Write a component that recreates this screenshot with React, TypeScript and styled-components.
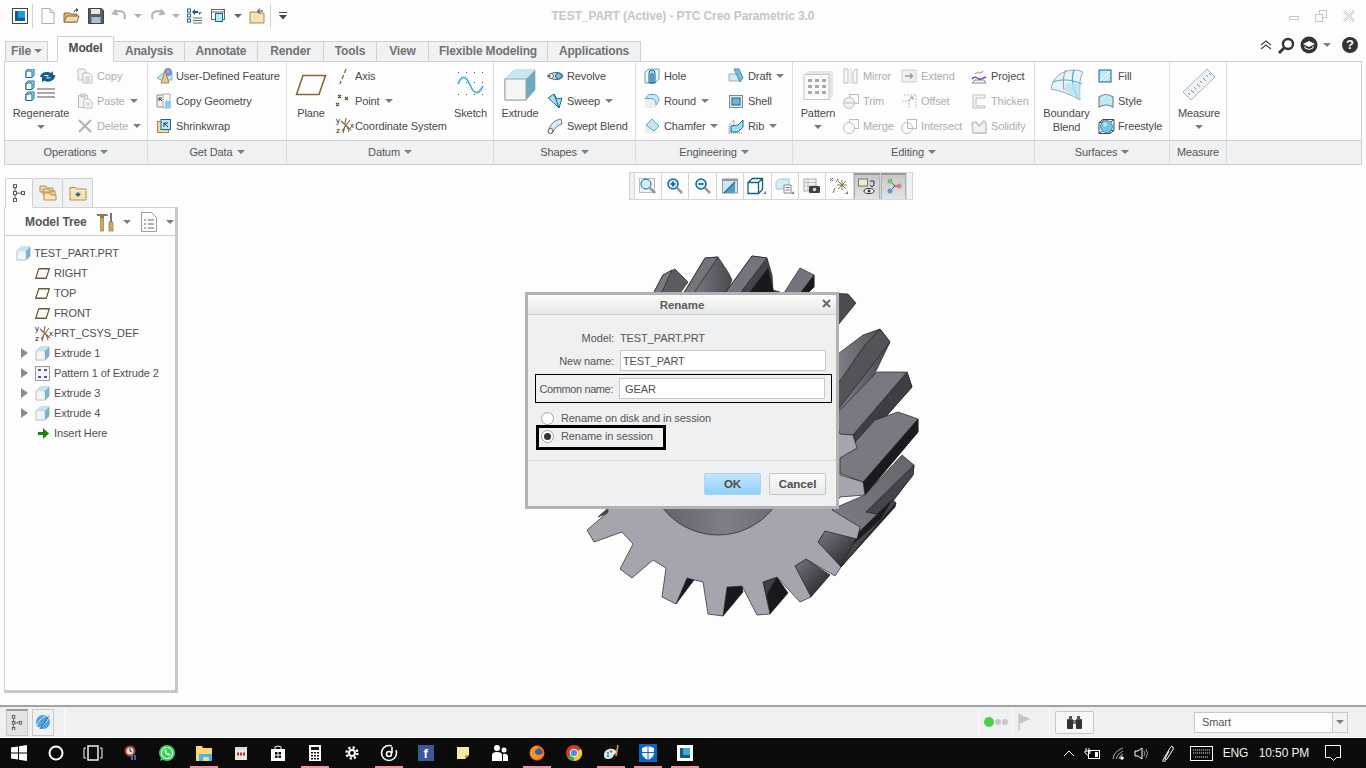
import React from "react";
import styled, { createGlobalStyle } from "styled-components";

const Global = createGlobalStyle`
  html, body {
    margin: 0;
    width: 1366px;
    height: 768px;
    overflow: hidden;
    background: #fdfdfd;
    font-family: "Liberation Sans", Arial, sans-serif;
    font-size: 11px;
    letter-spacing: -0.1px;
    color: #4a4a4a;
  }
  svg { display: block; flex: none; }
`;

const Page = styled.div`
  width: 1366px;
  height: 768px;
  display: flex;
  flex-direction: column;
`;

/* title bar */
const TitleBar = styled.div`
  height: 36px;
  display: grid;
  grid-template-columns: 1fr auto 1fr;
  align-items: center;
  padding-bottom: 4px;
  box-sizing: border-box;
`;
const Qat = styled.div`
  display: flex;
  align-items: center;
  padding-left: 12px;
`;
const QatItem = styled.div<{ $w: number }>`
  width: ${(p) => p.$w}px;
  display: flex;
  align-items: center;
`;
const QatSep = styled.div`
  width: 1px;
  height: 24px;
  background: #d4d4d4;
`;
const Title = styled.div`
  font-weight: bold;
  color: #c6c6c6;
  font-size: 12px;
  padding-bottom: 1px;
`;
const WinControls = styled.div`
  display: flex;
  justify-content: flex-end;
  align-items: center;
  gap: 16px;
  padding-right: 11px;
`;

const Caret = styled.span<{ $c?: string }>`
  display: inline-block;
  flex: none;
  width: 0;
  height: 0;
  border-left: 4px solid transparent;
  border-right: 4px solid transparent;
  border-top: 4px solid ${(p) => p.$c || "#7c7c7c"};
`;

/* tabs */
const TabRow = styled.div`
  height: 25px;
  display: flex;
  align-items: flex-end;
  padding-left: 5px;
  position: relative;
  z-index: 1;
`;
const Tab = styled.div<{ $w: number; $active?: boolean }>`
  width: ${(p) => p.$w}px;
  height: ${(p) => (p.$active ? 26 : 21)}px;
  box-sizing: border-box;
  display: flex;
  align-items: center;
  justify-content: center;
  gap: 3px;
  padding-bottom: 2px;
  font-weight: bold;
  font-size: 12px;
  letter-spacing: -0.15px;
  color: ${(p) => (p.$active ? "#4c4c4c" : "#707276")};
  background: ${(p) => (p.$active ? "#fdfdfd" : "#f0f1f3")};
  border: 1px solid #cfd0d2;
  border-left-width: ${(p) => (p.$active ? 1 : 0)}px;
  border-bottom: ${(p) => (p.$active ? "1px solid #fdfdfd" : "1px solid #cfd0d2")};
  border-radius: ${(p) => (p.$active ? "2px 2px 0 0" : "0")};
  margin-bottom: -1px;
`;
const FileTab = styled(Tab)`
  border-left-width: 1px;
  margin-right: 9px;
`;
const HelpTools = styled.div`
  margin-left: auto;
  align-self: flex-start;
  display: flex;
  align-items: center;
  padding-right: 8px;
  gap: 5px;
`;
const HelpCircle = styled.div`
  width: 16px;
  height: 16px;
  border-radius: 50%;
  background: #333;
  color: #fff;
  font-weight: bold;
  font-size: 13px;
  line-height: 16px;
  text-align: center;
  margin-left: 6px;
`;

/* ribbon */
const Ribbon = styled.div`
  margin: 0 4px;
  height: 104px;
  box-sizing: border-box;
  border: 1px solid #cfd0d2;
  display: flex;
  background: #fdfdfd;
`;
const GroupBox = styled.div<{ $w?: number }>`
  ${(p) => (p.$w ? `width: ${p.$w}px;` : "flex: 1;")}
  flex-shrink: 0;
  box-sizing: border-box;
  display: flex;
  flex-direction: column;
  border-right: 1px solid #dcdddf;
  &:last-child { border-right: 0; }
`;
const GroupBody = styled.div<{ $pad: number; $gap: number }>`
  height: 78px;
  display: flex;
  padding-left: ${(p) => p.$pad}px;
  gap: ${(p) => p.$gap}px;
`;
const GroupFooter = styled.div`
  flex: 1;
  background: #f0f1f3;
  border-top: 1px solid #cfd0d2;
  display: flex;
  align-items: center;
  justify-content: center;
  gap: 4px;
  padding-bottom: 1px;
  color: #555;
`;
const BigBtn = styled.div<{ $w: number }>`
  width: ${(p) => p.$w}px;
  padding-top: 4px;
  display: flex;
  flex-direction: column;
  align-items: center;
  text-align: center;
  line-height: 14px;
  white-space: nowrap;
`;
const BigIcon = styled.div`
  height: 38px;
  display: flex;
  align-items: center;
  justify-content: center;
  margin-bottom: 2px;
`;
const BigCaret = styled(Caret)`
  margin-top: 5px;
`;
const SmallCol = styled.div<{ $w?: number; $ml?: number }>`
  ${(p) => (p.$w ? `width: ${p.$w}px;` : "")}
  margin-left: ${(p) => p.$ml || 0}px;
  padding-top: 1px;
  display: flex;
  flex-direction: column;
`;
const SmallBtn = styled.div<{ $off?: boolean }>`
  height: 25px;
  display: flex;
  align-items: center;
  gap: 4px;
  white-space: nowrap;
  color: ${(p) => (p.$off ? "#aeaeae" : "#4a4a4a")};
  ${Caret} { margin-left: 1px; }
`;
const IconSlot = styled.div`
  width: 16px;
  flex: none;
  display: flex;
  justify-content: flex-start;
`;

/* main */
const Main = styled.div`
  height: 540px;
  display: flex;
`;
const Sidebar = styled.div`
  width: 178px;
  flex: none;
  box-sizing: border-box;
  padding: 13px 0 12px 4px;
  display: flex;
  flex-direction: column;
`;
const SideTabs = styled.div`
  height: 29px;
  display: flex;
  padding-left: 1px;
`;
const SideTab = styled.div<{ $active?: boolean }>`
  width: ${(p) => (p.$active ? 28 : 30)}px;
  box-sizing: border-box;
  display: flex;
  align-items: center;
  justify-content: center;
  background: ${(p) => (p.$active ? "#fdfdfd" : "#f0f1f3")};
  border: 1px solid #cfd0d2;
  border-left-width: ${(p) => (p.$active ? 1 : 0)}px;
  border-bottom: ${(p) => (p.$active ? "1px solid #fdfdfd" : "1px solid #cfd0d2")};
  border-radius: 2px 2px 0 0;
  position: relative;
  z-index: 1;
  margin-bottom: -1px;
`;
const TreePanel = styled.div`
  flex: 1;
  border: 1px solid #cfd0d2;
  border-right: 3px solid #c8c9cb;
  border-bottom: 3px solid #c8c9cb;
  background: #fdfdfd;
`;
const TreeHeader = styled.div`
  height: 27px;
  border-bottom: 1px solid #cfd0d2;
  display: flex;
  align-items: center;
  padding-left: 20px;
  font-weight: bold;
  color: #555;
  font-size: 12px;
`;
const TreeTitle = styled.div`
  width: 71px;
`;
const Spacer = styled.div<{ $w: number }>`
  width: ${(p) => p.$w}px;
  flex: none;
`;
const TreeBody = styled.div`
  padding-top: 7px;
`;
const TreeRow = styled.div<{ $pad: number }>`
  height: 20px;
  display: flex;
  align-items: center;
  padding-left: ${(p) => p.$pad}px;
  white-space: nowrap;
  color: #505050;
`;
const Expander = styled.div<{ $w?: number }>`
  width: ${(p) => p.$w || 15}px;
  flex: none;
`;
const Arrow = styled.div`
  width: 0;
  height: 0;
  margin-left: 1px;
  border-top: 5px solid transparent;
  border-bottom: 5px solid transparent;
  border-left: 7px solid #8c8c8c;
`;
const RowIcon = styled.div<{ $gap: number }>`
  margin-right: ${(p) => p.$gap}px;
`;

/* canvas */
const Canvas = styled.div`
  flex: 1;
  position: relative;
  display: flex;
  justify-content: center;
  align-items: flex-start;
  padding-top: 7px;
`;
const GfxBar = styled.div`
  height: 28px;
  box-sizing: border-box;
  border: 1px solid #d4d5d7;
  background: #f0f1f3;
  display: flex;
  padding: 0 5px 0 4px;
  margin-right: 2px;
`;
const GfxBtn = styled.div<{ $on?: boolean }>`
  width: 27.4px;
  box-sizing: border-box;
  display: flex;
  align-items: center;
  justify-content: center;
  background: ${(p) => (p.$on ? "linear-gradient(#c4c5c7,#e2e3e5)" : "#fdfdfd")};
  border-left: 1px solid #d4d5d7;
  box-shadow: ${(p) => (p.$on ? "inset 0 2px 0 #9a9a9a, inset 1px 0 0 #b0b0b0, inset -1px 0 0 #b0b0b0" : "none")};
  &:last-child { border-right: 1px solid #d4d5d7; }
`;
const GearLayer = styled.svg`
  position: absolute;
  left: 392px;
  top: 75px;
`;

/* dialog */
const Dialog = styled.div`
  position: absolute;
  left: 347px;
  top: 127px;
  width: 314px;
  height: 217px;
  box-sizing: border-box;
  border: 3px solid #b0b2b4;
  background: #eff0f2;
  display: flex;
  flex-direction: column;
`;
const DialogTitle = styled.div`
  height: 19px;
  flex: none;
  background: linear-gradient(#fbfbfb, #e6e7e9);
  border-bottom: 1px solid #cdcfd1;
  display: flex;
  align-items: center;
  justify-content: center;
  position: relative;
  font-weight: bold;
  font-size: 11.5px;
  letter-spacing: 0;
  color: #5c5c5c;
`;
const CloseX = styled.div`
  position: absolute;
  right: 5px;
  top: 4px;
`;
const DialogBody = styled.div`
  height: 146px;
  flex: none;
  box-sizing: border-box;
  padding-top: 14px;
  border-bottom: 1px solid #d8d9db;
  color: #555;
`;
const FormRow = styled.div`
  display: flex;
  align-items: center;
  height: 18px;
  margin-bottom: 3px;
`;
const NameRow = styled(FormRow)`
  height: 21px;
`;
const OutlinedRow = styled(FormRow)`
  height: 29px;
  box-sizing: border-box;
  margin: 3px 4px 0 7px;
  border: 1.5px solid #000;
`;
const FieldLabel = styled.div<{ $w: number }>`
  width: ${(p) => p.$w}px;
  flex: none;
  text-align: right;
  margin-right: 6px;
  white-space: nowrap;
`;
const TightLabel = styled(FieldLabel)`
  letter-spacing: -0.4px;
`;
const Field = styled.div<{ $pad?: number }>`
  width: 206px;
  height: 21px;
  box-sizing: border-box;
  border: 1px solid #c6c8ca;
  background: #fff;
  display: flex;
  align-items: center;
  padding-left: ${(p) => p.$pad || 2}px;
  color: #505050;
`;
const RadioRow = styled.div`
  display: flex;
  align-items: center;
  gap: 7px;
  height: 18px;
  margin: 6px 0 0 13px;
`;
const RadioBoxed = styled(RadioRow)`
  box-sizing: border-box;
  width: 130px;
  height: 25px;
  margin: -2px 0 0 8px;
  padding: 0 0 3px 2px;
  border: 3px solid #000;
`;
const Radio = styled.div<{ $on?: boolean }>`
  width: 13px;
  height: 13px;
  box-sizing: border-box;
  flex: none;
  border-radius: 50%;
  border: 1px solid #a4a4a4;
  background: #fff;
  display: flex;
  align-items: center;
  justify-content: center;
  &::after {
    content: "";
    width: 7px;
    height: 7px;
    border-radius: 50%;
    background: ${(p) => (p.$on ? "#333" : "transparent")};
  }
`;
const DialogFooter = styled.div`
  flex: 1;
  display: flex;
  justify-content: flex-end;
  align-items: flex-start;
  gap: 8px;
  padding: 12px 10px 0 0;
`;
const DlgBtn = styled.div<{ $primary?: boolean }>`
  width: 57px;
  height: 22px;
  box-sizing: border-box;
  border-radius: 2px;
  border: 1px solid ${(p) => (p.$primary ? "#a9d6f2" : "#c4c6c8")};
  background: ${(p) => (p.$primary ? "linear-gradient(#c4e6fb,#8ed0f8)" : "linear-gradient(#fbfbfb,#e8e9eb)")};
  display: flex;
  align-items: center;
  justify-content: center;
  font-weight: bold;
  font-size: 11.5px;
  letter-spacing: 0;
  color: #4c4c4c;
`;

/* status bar */
const StatusBar = styled.div`
  height: 33px;
  box-sizing: border-box;
  border-top: 2px solid #a2a2a2;
  border-bottom: 1px solid #fdfdfd;
  background: #eff0f2;
  display: flex;
  align-items: center;
  padding-left: 6px;
`;
const StatusBtn = styled.div<{ $on?: boolean }>`
  width: 22px;
  height: 27px;
  margin-right: 4px;
  box-sizing: border-box;
  display: flex;
  align-items: center;
  justify-content: center;
  border: 1px solid #c6c8ca;
  border-top: ${(p) => (p.$on ? "2px solid #9a9a9a" : "1px solid #c6c8ca")};
  background: ${(p) => (p.$on ? "#e2e3e5" : "#eff0f2")};
`;
const StatusSep = styled.div<{ $mr?: number; $ml?: number }>`
  width: 1px;
  height: 28px;
  background: #fbfbfb;
  margin-left: ${(p) => p.$ml || 0}px;
  margin-right: ${(p) => p.$mr || 0}px;
`;
const Dot = styled.div<{ $c: string; $s: number }>`
  width: ${(p) => p.$s}px;
  height: ${(p) => p.$s}px;
  border-radius: 50%;
  background: ${(p) => p.$c};
  margin-right: 1px;
`;
const FindBtn = styled.div`
  width: 39px;
  height: 23px;
  margin-left: 5px;
  box-sizing: border-box;
  border: 1px solid #c6c8ca;
  border-radius: 2px;
  background: #f7f7f8;
  display: flex;
  align-items: center;
  justify-content: center;
`;
const Select = styled.div`
  width: 154px;
  height: 21px;
  margin-left: 100px;
  box-sizing: border-box;
  border: 1px solid #c6c8ca;
  background: #fdfdfd;
  display: flex;
  align-items: center;
  padding-left: 7px;
  color: #555;
`;
const SelectBtn = styled.div`
  margin-left: auto;
  width: 14px;
  height: 100%;
  border-left: 1px solid #c6c8ca;
  background: #f0f1f3;
  display: flex;
  align-items: center;
  justify-content: center;
`;

/* taskbar */
const Taskbar = styled.div`
  height: 30px;
  background: #0b0b0b;
  display: flex;
  align-items: center;
  color: #f2f2f2;
`;
const TaskItem = styled.div<{ $open?: boolean }>`
  width: 37px;
  height: 30px;
  flex: none;
  position: relative;
  display: flex;
  align-items: center;
  justify-content: center;
  &::after {
    content: "";
    display: ${(p) => (p.$open ? "block" : "none")};
    position: absolute;
    left: 5px;
    right: 4px;
    bottom: 0;
    height: 2px;
    background: #f5919f;
  }
`;
const FbLetter = styled.div`
  width: 16px;
  height: 16px;
  background: #3b5998;
  color: #fff;
  font-weight: bold;
  font-size: 13px;
  line-height: 17px;
  text-align: center;
`;
const Tray = styled.div`
  margin-left: auto;
  display: flex;
  align-items: center;
  font-size: 12px;
`;
const TrayCell = styled.div<{ $w: number }>`
  width: ${(p) => p.$w}px;
  display: flex;
  justify-content: center;
  white-space: nowrap;
`;

/* drawings */
const S = ({ w = 16, h = 16, children }: { w?: number; h?: number; children: React.ReactNode }) => (
  <svg width={w} height={h} viewBox={`0 0 ${w} ${h}`} fill="none">
    {children}
  </svg>
);

const BLUE = "#146a8e";
const TAN = "#86693a";
const OFF = "#bdbdbd";

const MiniCube = ({ x, y }: { x: number; y: number }) => (
  <g>
    <path d={`M${x} ${y + 2}l2 -2h6v6.500l-2 2h-6z`} fill="#bfe6f5" stroke={BLUE} />
    <path d={`M${x} ${y + 2}h6v6.500h-6z`} fill="#f6fbfd" stroke={BLUE} />
  </g>
);

const Cube = ({ s = 16 }: { s?: number }) => (
  <svg width={s} height={s} viewBox="0 0 16 16" fill="none">
    <path d="M1 5.500L5.500 1H15V11L10.500 15H1z" fill="#f3f4f5" stroke="#b8bcc0" />
    <path d="M1 5.500L5.500 1H15L10.500 5.500z" fill="#bfe4f3" />
    <path d="M10.500 5.500L15 1V11L10.500 15z" fill="#79b2cb" />
  </svg>
);

const Plane = ({ w = 16, h = 11, c = TAN, sw = 1 }: { w?: number; h?: number; c?: string; sw?: number }) => (
  <svg width={w} height={h} viewBox="0 0 32 22" fill="none" preserveAspectRatio="none">
    <path d="M8 1.500H30.500L24 20.500H1.500z" stroke={c} strokeWidth={sw * 2} />
  </svg>
);

const Csys = () => (
  <S w={20} h={17}>
    <path d="M11 1l-1 6M6 4l10 9M15 3L7 14M10 9l-2 7M12 9l2 6" stroke={TAN} strokeWidth="1.100" />
    <text x="1" y="6" fontSize="8" fill="#222" fontFamily="Liberation Sans">y</text>
    <text x="1" y="16" fontSize="8" fill="#222" fontFamily="Liberation Sans">z</text>
    <text x="15" y="11" fontSize="8" fill="#222" fontFamily="Liberation Sans">x</text>
  </S>
);

const icons: Record<string, React.ReactNode> = {
  copy: (
    <S>
      <path d="M1 1h6l2 2v9H1z" fill="#f2f2f2" stroke={OFF} />
      <path d="M6 5h6l3 3v7H6z" fill="#fafafa" stroke={OFF} />
      <path d="M8 9h5M8 11h5M8 13h5" stroke={OFF} />
    </S>
  ),
  paste: (
    <S>
      <rect x="1.500" y="2.500" width="9" height="12" fill="#f2f2f2" stroke={OFF} />
      <rect x="4" y="1" width="4" height="3" fill="#dcdcdc" stroke={OFF} />
      <path d="M7 6h5l3 3v6H7z" fill="#fafafa" stroke={OFF} />
      <path d="M9 10h4M9 12h4" stroke={OFF} />
    </S>
  ),
  del: (
    <S>
      <path d="M2 2l12 12M14 2L2 14" stroke="#b4b4b4" strokeWidth="2.200" />
    </S>
  ),
  udf: (
    <S w={17}>
      <path d="M1 10l6-5h9v7H5z" fill="#bfe4f3" stroke="#7fb2c9" />
      <circle cx="12" cy="4" r="3.500" fill="#8e9fd8" stroke="#6a77b0" />
      <path d="M9 3l-4 12h8z" fill="#e7c98c" stroke="#a98a4c" />
    </S>
  ),
  copyGeom: (
    <S>
      <path d="M1 2h9v12H1z" fill="#eef0f2" stroke="#8b8f93" />
      <path d="M3 5l3 3M3 8V5h3" stroke="#333" />
      <path d="M7 1h7v14H7z" fill="#fafafa" stroke="#a8acb0" />
      <rect x="9" y="8" width="6" height="7" fill="#7fd0ec" />
    </S>
  ),
  shrink: (
    <S>
      <rect x="1.500" y="3.500" width="11" height="11" fill="#edd9a8" stroke="#a98a4c" />
      <rect x="5" y="1.500" width="9.500" height="10" fill="#bfe4f3" stroke={BLUE} />
      <path d="M8 5l4 4M8 9V5h4" stroke="#333" />
    </S>
  ),
  axis: (
    <S>
      <path d="M11 1L9.500 5M8.500 7L7 11M6 13l-1 3" stroke={TAN} strokeWidth="1.300" />
    </S>
  ),
  point: (
    <S>
      <path d="M3 2l3 3M6 2L3 5M10 4l3 3M13 4l-3 3M1 10l3 3M4 10l-3 3" stroke="#5a4a2c" strokeWidth="1.100" />
    </S>
  ),
  revolve: (
    <S w={17}>
      <ellipse cx="9" cy="8" rx="7" ry="3.500" fill="#cfeaf6" stroke="#666" />
      <circle cx="11.500" cy="8" r="3" fill="#6fc3e4" stroke={BLUE} />
      <circle cx="4" cy="8" r="2.500" fill="#fff" stroke="#666" />
      <path d="M0 8h4" stroke="#333" />
    </S>
  ),
  sweep: (
    <S w={16}>
      <path d="M1 5l6-4 3 5 5-1-3 10-5-5z" fill="#a9dcf1" stroke={BLUE} />
      <path d="M7 1l5 14" stroke={BLUE} />
      <path d="M1 5l6 5" stroke="#8fa0a8" />
    </S>
  ),
  blend: (
    <S w={16}>
      <path d="M2 12C3 6 8 2 14 1l1 5C11 7 8 10 6 14z" fill="#cfe6f0" stroke="#6b7d86" />
      <circle cx="3.500" cy="13" r="2.500" fill="#f4f4f4" stroke="#555" />
      <path d="M5 9c2-3 5-5 9-6" stroke="#fff" />
    </S>
  ),
  hole: (
    <S>
      <path d="M1 4l4-3h10v10l-4 4H1z" fill="#e8f4fa" stroke="#7f9aa8" />
      <path d="M5 15V5q0-3 3-3t3 3v10z" fill="#9ed6ee" stroke={BLUE} />
      <path d="M7 15V6h2v9" stroke={BLUE} />
    </S>
  ),
  round: (
    <S>
      <path d="M1 6h8l3 3v6H1z" fill="#eeeeee" />
      <path d="M1 5.500L5 1.500h5c3 0 5 3 5 6l-3 4.500C12 8 10 5.500 7 5.500z" fill="#c7e6f4" stroke="#5ca7c8" />
    </S>
  ),
  chamfer: (
    <S>
      <path d="M1 7h7l5 5v3H1z" fill="#eeeeee" />
      <path d="M2 7l6-6 7 7-5 5z" fill="#c7e6f4" stroke="#5ca7c8" />
    </S>
  ),
  draft: (
    <S>
      <path d="M1 6h9l3 7H1z" fill="#d4e9f3" stroke="#8fb6c8" />
      <path d="M6 1h5l4 9-3 4z" fill="#7cbcd8" stroke="#4d8eab" />
    </S>
  ),
  shell: (
    <S>
      <rect x="1.500" y="2.500" width="13" height="12" fill="#e4e8ea" stroke="#7d8a91" />
      <rect x="4" y="5" width="8" height="7" fill="#6db5d6" stroke={BLUE} />
    </S>
  ),
  rib: (
    <S>
      <path d="M1 7l5-5v8l-5 5z" fill="#f2f2f2" stroke="#778" strokeDasharray="1 1" />
      <path d="M3 8l7-1 5-5v7l-5 5H3z" fill="#a3dcf2" stroke={BLUE} />
      <path d="M1 15h13" stroke="#778" strokeDasharray="1 1" />
    </S>
  ),
  mirror: (
    <S>
      <path d="M1 1h4v14H1z" stroke={OFF} fill="#f8f8f8" />
      <path d="M8 0v16" stroke="#d4d4d4" />
      <path d="M10 15V5q0-3 4-4v14z" stroke={OFF} fill="#f8f8f8" />
    </S>
  ),
  trim: (
    <S>
      <rect x="6.500" y="1.500" width="9" height="9" stroke={OFF} fill="#fafafa" />
      <circle cx="6" cy="10" r="5.500" stroke={OFF} fill="#f2f2f2" />
      <path d="M1 10h10" stroke={OFF} />
    </S>
  ),
  merge: (
    <S>
      <rect x="6.500" y="1.500" width="9" height="9" stroke={OFF} fill="#fafafa" />
      <circle cx="6" cy="10" r="5.500" stroke={OFF} fill="#fafafa" />
    </S>
  ),
  extend: (
    <S>
      <rect x="1" y="2" width="14" height="12" fill="#f0f0f0" stroke="#d0d0d0" />
      <path d="M4 8h7M9 5.500L11.500 8 9 10.500" stroke="#9a9a9a" strokeWidth="1.300" />
    </S>
  ),
  offset: (
    <S>
      <path d="M1 8h7v7M3 2h12v13" stroke={OFF} strokeDasharray="2 1" />
      <path d="M7 8l5-4M12 7V4H9" stroke="#9a9a9a" />
    </S>
  ),
  intersect: (
    <S>
      <rect x="6.500" y="1.500" width="9" height="9" stroke={OFF} />
      <circle cx="6" cy="10" r="5.500" stroke={OFF} />
    </S>
  ),
  project: (
    <S>
      <path d="M1 15l3-3h9l2 3z" fill="#f7f7f7" stroke="#8a8a8a" />
      <path d="M1 11c3-4 5-1 7 0s4-1 7-2" stroke="#7a3fa8" strokeWidth="1.400" />
      <path d="M4 6c2-3 5 1 8-3" stroke="#8a8a8a" />
    </S>
  ),
  thicken: (
    <S>
      <path d="M2 2h12v3H5v8h9v2H2z" fill="#f6f6f6" stroke={OFF} />
    </S>
  ),
  solidify: (
    <S>
      <path d="M1 5l4-1 3 4 5-5 2 2v10H2z" fill="#f2f2f2" stroke={OFF} strokeWidth="1.300" />
    </S>
  ),
  fill: (
    <S w={14} h={14}>
      <rect x="1" y="1" width="12" height="12" fill="#bce4f6" stroke={BLUE} />
      <path d="M2 8l6-6M2 12L12 2M6 12l6-6" stroke="#fff" />
    </S>
  ),
  style: (
    <S>
      <path d="M1 4q7-5 14 0v10q-7-4-14 0z" fill="#c0e8f8" stroke="#7a8286" strokeWidth="1.200" />
    </S>
  ),
  freestyle: (
    <S w={17}>
      <path d="M1 4.500h11v11H1zM5 1.500h11v11H5zM1 4.500l4-3M12 4.500l4-3M12 15.500l4-3M1 15.500l4-3" stroke="#444" />
      <circle cx="8.500" cy="8.500" r="6" fill="#6fc8e6" stroke="#3b8fae" />
      <circle cx="7" cy="6.500" r="2" fill="#c4ecf8" />
    </S>
  ),
};

const RegenIcon = () => (
  <S w={32} h={32}>
    <MiniCube x={1} y={0} />
    <MiniCube x={1} y={12} />
    <MiniCube x={1} y={23} />
    <path d="M15 8a7 6 0 0 1 11-4l2-2v6.500h-6l2-2a4.500 3.500 0 0 0-6.500 1.500z" fill="#0f5f86" />
    <path d="M30 6a7 6 0 0 1-11 5.500l-2 2V7h6l-2 2a4.500 3.500 0 0 0 6.500-3z" fill="#0f5f86" />
    <path d="M12 20h18M12 24h18M12 28h18" stroke="#8d8d8d" strokeWidth="1.500" />
  </S>
);

const SketchIcon = () => (
  <S w={28} h={30}>
    <g fill="#555">
      {[1, 9, 17, 25].flatMap((x) => [2, 12, 24].map((y) => <rect key={`${x}-${y}`} x={x} y={y} width="1" height="1" />))}
    </g>
    <path d="M1 14c4-10 8-8 12 1s8 11 13 1" stroke="#4bb4dc" strokeWidth="1.800" />
  </S>
);

const ExtrudeIcon = () => (
  <S w={32} h={32}>
    <path d="M1 10L10 1H31V21L22 31H1z" fill="#f4f5f6" stroke="#b4b8bc" />
    <path d="M1 10L10 1H31L22 10z" fill="#c6e8f6" />
    <path d="M22 10L31 1V21L22 31z" fill="#6ea9c4" />
    <rect x="1" y="10" width="21" height="21" fill="#f4f5f6" stroke="#9ea2a6" />
  </S>
);

const PatternIcon = () => (
  <S w={32} h={32}>
    <path d="M2 5l4-3h25v25l-4 4H2z" fill="#e4e6e8" />
    <rect x="2" y="5.500" width="25" height="25" fill="#fafafa" stroke="#c4c6c8" />
    <g fill="#a9a9a9">
      {[6, 13, 20].flatMap((x) => [10, 16, 22].map((y) => <rect key={`${x}-${y}`} x={x} y={y} width="4" height="3" />))}
    </g>
  </S>
);

const BoundaryIcon = () => (
  <S w={34} h={32}>
    <path d="M1 20C2 9 12 1 24 1c4 0 7 1 9 2-4 6-4 20-3 28-8-5-18-9-29-11z" fill="#e4f4fb" stroke="#9aa6ac" />
    <path d="M16 1c-3 6-3 12-2 20M33 3" stroke="#8a9aa2" />
    <path d="M3 13c8-3 18-3 29 2" stroke="#4ba8cc" />
    <path d="M24 1c-3 8-2 20 6 30" stroke="#4ba8cc" strokeWidth="1.200" />
    <path d="M15 15c6-2 11-1 16 1l-1 15c-5-4-10-7-14-9z" fill="#b7e2f3" opacity=".8" />
  </S>
);

const MeasureIcon = () => (
  <S w={34} h={34}>
    <path d="M1 24L25 1l8 8L9 32z" fill="#f2f3f4" stroke="#b4b4b4" />
    <path d="M6 25l2 2M9 22l3 3M12 19l2 2M15 16l3 3M18 13l2 2M21 10l3 3M24 7l2 2M27 5l2 2" stroke="#3f9fc4" />
  </S>
);

const CubeSmall = () => <Cube s={15} />;

const TreeIcon = ({ s = 14 }: { s?: number }) => (
  <svg width={s} height={s * 1.3} viewBox="0 0 14 18" fill="none" stroke="#555">
    <rect x="1.500" y="0.500" width="3" height="3" />
    <rect x="1.500" y="7.500" width="3" height="3" />
    <rect x="9.500" y="7.500" width="3" height="3" />
    <rect x="1.500" y="14.500" width="3" height="3" />
    <path d="M3 3.500v4M3 10.500v4M4.500 9h5" />
  </svg>
);

const StarFolder = () => (
  <S w={18} h={15}>
    <path d="M1 3V1.500h6l1 1.500h9v11H1z" fill="#f7e2b0" stroke="#b4914e" />
    <path d="M1.500 4.500h15" stroke="#fff6df" />
    <path d="M9 6v5M6.500 8.500h5M7.300 6.800l3.400 3.400M10.700 6.800l-3.400 3.400" stroke="#0f5f86" />
  </S>
);

const GhostIcon = () => (
  <S w={18} h={18}>
    <path d="M1 8V2h6l1 2h6v4zM4 11V5h6l1 2h5v4z" fill="#f3dca6" stroke="#b4914e" />
    <path d="M5 16V9h6l1 2h5v5z" fill="#f8e7bd" stroke="#b4914e" />
  </S>
);

const Magnifier = ({ mode }: { mode: "fit" | "in" | "out" }) => (
  <S w={18} h={18}>
    {mode === "fit" && <rect x="0.500" y="1.500" width="15" height="14" fill="#f2f4f5" stroke="#bcbcbc" />}
    <circle cx="7" cy="7" r="5" fill="#d5eef8" stroke={BLUE} strokeWidth={mode === "fit" ? 1 : 1.500} />
    <path d="M11 11l5 5" stroke="#999" strokeWidth="2.500" />
    {mode !== "fit" && <path d="M4.500 7h5" stroke={BLUE} strokeWidth="1.800" />}
    {mode === "in" && <path d="M7 4.500v5" stroke={BLUE} strokeWidth="1.800" />}
  </S>
);

const SmallCorner = ({ children }: { children: React.ReactNode }) => (
  <S w={20} h={18}>
    {children}
    <path d="M19 14v3h-3z" fill="#777" />
  </S>
);

const FrontFace =
  "608,512 587,530 594,542 622,532 633,544 620,569 632,578 653,560 666,568 662,597 676,604 687,578 703,582 708,614 723,616 727,587 742,586 757,615 770,614 763,582 777,577 800,602 811,597 795,566 806,559 835,576 841,567 818,542 825,531 857,539 860,527 832,510 840,497 865,495 863,482 840,475 840,458 857,448 853,435 840,434 800,330 640,330 600,420";

const Gear = () => (
  <GearLayer width={380} height={400} viewBox="570 240 380 400">
    <defs>
      <linearGradient id="gMid" x1="0" y1="0" x2="1" y2="0">
        <stop offset="0" stopColor="#8a8690" />
        <stop offset="1" stopColor="#4b4850" />
      </linearGradient>
      <linearGradient id="gTop" x1="0" y1="1" x2="1" y2="0">
        <stop offset="0" stopColor="#85818b" />
        <stop offset="1" stopColor="#66636c" />
      </linearGradient>
      <linearGradient id="gDark" x1="0" y1="0" x2="1" y2="1">
        <stop offset="0" stopColor="#7b7781" />
        <stop offset="1" stopColor="#1c1a1f" />
      </linearGradient>
      <linearGradient id="gHub" x1="0" y1="0" x2="1" y2="0">
        <stop offset="0" stopColor="#5f5c65" />
        <stop offset=".55" stopColor="#817d87" />
        <stop offset="1" stopColor="#6a6770" />
      </linearGradient>
    </defs>
    <g stroke="#222" strokeWidth=".7" strokeLinejoin="round">
      {/* top teeth */}
      <polygon points="652,296 663,275 675,269 688,282 678,296" fill="#5e5b64" />
      <polygon points="652,296 663,275 672,270 660,296" fill="#7c7882" />
      <polygon points="682,296 705,258 718,257 728,272 732,280 725,296" fill="url(#gMid)" />
      <polygon points="682,296 705,258 718,257 692,296" fill="#77737d" />
      <polygon points="723,296 752,256 767,258 772,275 773,290 780,292 782,296" fill="#47444c" />
      <polygon points="723,296 752,256 767,258 738,296" fill="#77737d" />
      <polygon points="747,296 768,268 773,290 775,296" fill="#1a181d" />
      <polygon points="782,296 800,268 814,275 814,287 805,296" fill="#77737d" />
      <polygon points="798,296 814,275 814,287 805,296" fill="#1a181d" />
      {/* right teeth */}
      <polygon points="830,293 848,294 856,303 830,335" fill="#4d4a52" />
      <polygon points="830,360 863,335 880,329 890,342 875,373 860,400 830,420" fill="url(#gMid)" />
      <polygon points="865,345 880,329 890,342 830,420 830,395" fill="#55525a" />
      <polygon points="830,420 877,372 907,372 912,387 858,448 853,435 830,434" fill="#7c7882" />
      <polygon points="907,372 912,387 858,448 853,435" fill="#403d45" />
      <polygon points="830,470 875,420 898,412 918,419 918,432 865,495 863,482" fill="#7c7882" />
      <polygon points="918,419 918,432 865,495 863,482" fill="#1c1a1f" />
      <polygon points="830,510 865,495 902,455 914,465 913,475 882,515 840,560 825,520" fill="url(#gTop)" />
      <polygon points="914,465 913,475 882,515 866,512" fill="#47444c" />
      <polygon points="858,533 892,500 896,503 895,507 841,567" fill="#1c1a1f" />
      <polygon points="880,520 892,500 896,503 841,567 835,560" fill="#47444c" />
      {/* bottom shaded gaps */}
      <polygon points="598,517 607,509 608,513" fill="#4a4750" />
      <polygon points="687,578 694,580 676,604" fill="#1a181d" />
      <polygon points="727,587 742,586 743,592 723,616" fill="#1a181d" />
      <polygon points="763,582 777,577 788,593 770,614" fill="#1a181d" />
      <polygon points="763,582 777,577 766,596" fill="#403d45" />
      <polygon points="795,566 806,559 830,575 811,597" fill="url(#gDark)" />
      <polygon points="818,542 825,531 860,531 841,567" fill="url(#gDark)" />
      {/* front */}
      <polygon points={FrontFace} fill="#a8a4ae" />
      <circle cx="718" cy="465" r="70" fill="url(#gHub)" />
    </g>
  </GearLayer>
);

const Group = ({
  w,
  label,
  pad,
  gap = 8,
  noCaret,
  children,
}: {
  w?: number;
  label?: string;
  pad?: number;
  gap?: number;
  noCaret?: boolean;
  children?: React.ReactNode;
}) => (
  <GroupBox $w={w}>
    <GroupBody $pad={pad ?? 8} $gap={gap}>
      {children}
    </GroupBody>
    <GroupFooter>
      {label}
      {label && !noCaret && <Caret />}
    </GroupFooter>
  </GroupBox>
);

const Big = ({ w, icon, lines, caret }: { w: number; icon: React.ReactNode; lines: string[]; caret?: boolean }) => (
  <BigBtn $w={w}>
    <BigIcon>{icon}</BigIcon>
    {lines.map((l) => (
      <div key={l}>{l}</div>
    ))}
    {caret && <BigCaret />}
  </BigBtn>
);

const Small = ({
  icon,
  label,
  off,
  caret,
}: {
  icon: string | React.ReactNode;
  label: string;
  off?: boolean;
  caret?: boolean;
}) => (
  <SmallBtn $off={off}>
    <IconSlot>{typeof icon === "string" ? icons[icon] : icon}</IconSlot>
    {label}
    {caret && <Caret />}
  </SmallBtn>
);

const Windows = () => (
  <S w={18} h={18}>
    <path d="M1 3.500l7-1v6H1zM9 2.300l8-1.200v7.400H9zM1 9.500h7v6l-7-1zM9 9.500h8v7.400l-8-1.200z" fill="#fff" />
  </S>
);

const taskIcons: { node: React.ReactNode; open?: boolean }[] = [
  { node: <Windows /> },
  { node: <S><circle cx="8" cy="8" r="6.500" stroke="#fff" strokeWidth="2" /></S> },
  { node: <S w={20} h={16}><rect x="5" y="1" width="10" height="14" stroke="#fff" strokeWidth="1.400" /><path d="M3 3H1v10h2M17 3h2v10h-2" stroke="#fff" /></S> },
  { node: <S><circle cx="8" cy="6" r="5.500" fill="#c0392b" /><circle cx="8" cy="6" r="3.500" fill="#e4e4e4" /><path d="M8 3v3l2 1" stroke="#333" /><path d="M10 10v5M13 10v5" stroke="#3c8dd0" strokeWidth="1.500" /></S> },
  { node: <S w={18} h={18}><circle cx="9" cy="9" r="8" fill="#3ccf5c" /><path d="M2 17l1.500-5 3 3z" fill="#3ccf5c" /><circle cx="9" cy="9" r="5.600" fill="none" stroke="#fff" /><path d="M6.500 6c0 3 2.500 5.500 5 5.500l.8-1.500-1.800-1-.7.600c-.8-.4-1.300-1-1.600-1.700l.6-.7-1-1.800z" fill="#fff" /></S> },
  { node: <S w={18} h={18}><path d="M1 2h6l1 2h9v13H1z" fill="#f8d775" /><path d="M4 10h13v7h-3v-4H8v4H4z" fill="#45b4ef" /></S>, open: true },
  { node: <S><rect x="2" y="2" width="12" height="3" fill="#ddd" /><rect x="2" y="5" width="12" height="10" fill="#f0e6d2" /><path d="M4 9h2M7 9h2M10 9h2" stroke="#b33" strokeWidth="3" /></S> },
  { node: <S><path d="M1 4h14v12H1z" fill="#fff" /><path d="M5 4V2q3-2 6 0v2" stroke="#fff" /><path d="M5 7h2.500v2.500H5zM8.500 7H11v2.500H8.500zM5 10.500h2.500V13H5zM8.500 10.500H11V13H8.500z" fill="#111" /></S> },
  { node: <S w={14} h={18}><rect x="1" y="1" width="12" height="16" fill="#fff" /><rect x="3" y="3" width="8" height="3" fill="#111" /><g fill="#111">{[3, 6, 9].flatMap((x) => [8, 11, 14].map((y) => <rect key={`${x}${y}`} x={x} y={y} width="2" height="1.500" />))}</g></S>, open: true },
  { node: <S><circle cx="8" cy="8" r="3" stroke="#fff" strokeWidth="2" /><circle cx="8" cy="8" r="5.500" stroke="#fff" strokeWidth="2.400" strokeDasharray="2.200 2.100" /></S> },
  { node: <S w={18} h={18}><circle cx="9" cy="9" r="7.500" stroke="#fff" strokeWidth="1.600" strokeDasharray="38 6" /><circle cx="9" cy="10" r="2.500" stroke="#fff" strokeWidth="1.600" /><path d="M12 3v6" stroke="#fff" strokeWidth="1.600" /></S>, open: true },
  { node: <FbLetter>f</FbLetter> },
  { node: <S><path d="M2 2h12v8l-4 4H2z" fill="#f4ec9e" /><path d="M10 14v-4h4z" fill="#b4ab5a" /></S> },
  { node: <S w={18} h={18}><circle cx="6" cy="4" r="3" fill="#fff" /><circle cx="13" cy="6" r="2.500" fill="#fff" /><path d="M1 17V11q0-3 5-3t5 3v6zM12 17v-7q4-1 5 2v5z" fill="#fff" /></S> },
  { node: <S w={18} h={18}><circle cx="9" cy="9" r="7.500" fill="#e8641b" /><circle cx="10" cy="9" r="4.500" fill="#3b5aa8" /><path d="M2 9C2 4 7 1 12 2c-3 0-3 2-2 3-3 0-4 3-2 5 2 2 6 1 8-2-1 5-5 8-9 7-3-1-5-3-5-6z" fill="#f3961f" /></S>, open: true },
  { node: <S w={18} h={18}><circle cx="9" cy="9" r="8" fill="#d8382c" /><path d="M9 9L2 13a8 8 0 0 0 7 4z" fill="#3aa757" /><path d="M9 9l7-4a8 8 0 0 1-7 12z" fill="#f9c91f" /><circle cx="9" cy="9" r="3.800" fill="#4a90e2" stroke="#fff" /></S> },
  { node: <S w={18} h={18}><path d="M2 11c0-5 5-7 9-6s4 4 2 5-2 5-6 5-5-1-5-4z" fill="#dfe8ee" /><circle cx="6" cy="9" r="1.200" fill="#2d9cdb" /><circle cx="9" cy="7.500" r="1.200" fill="#e74c3c" /><circle cx="6" cy="12" r="1.200" fill="#27ae60" /><path d="M14 12l2-11" stroke="#d99a3b" strokeWidth="1.600" /></S>, open: true },
  { node: <S w={18} h={18}><rect x="0" y="0" width="18" height="18" fill="#0a66c2" /><path d="M9 2l6 2v5q0 4-6 7-6-3-6-7V4z" fill="#fff" /><path d="M9 2v14M3 8.500h12" stroke="#0a66c2" /></S>, open: true },
  { node: <S w={18} h={18}><rect x="1" y="1" width="16" height="16" fill="#fff" /><rect x="4" y="4" width="10" height="10" fill="#0d5f8a" /><rect x="7" y="4" width="7" height="7" fill="#44a7d4" /></S>, open: true },
];

const tree = ["RIGHT", "TOP", "FRONT"];
const features = [
  { name: "Extrude 1" },
  { name: "Pattern 1 of Extrude 2", pattern: true },
  { name: "Extrude 3" },
  { name: "Extrude 4" },
];

function App() {
  return (
    <Page>
      <Global />
      <TitleBar>
        <Qat>
          <QatItem $w={20}>
            <S>
              <rect x="0.500" y="0.500" width="15" height="15" fill="#fff" stroke="#444" />
              <rect x="3" y="3" width="10" height="10" fill="#0d5f8a" />
              <rect x="6" y="3" width="7" height="7" fill="#1c9ce0" />
            </S>
          </QatItem>
          <QatSep />
          <QatItem $w={8} />
          <QatItem $w={22}>
            <S w={14}>
              <path d="M1 .500h8l4 4v11H1z" fill="#fbfcfd" stroke="#aab0b4" />
              <path d="M9 .500v4h4" stroke="#aab0b4" />
            </S>
          </QatItem>
          <QatItem $w={25}>
            <S w={17}>
              <path d="M1 14V5h6l1 1h6v8z" fill="#dcb56c" stroke="#8a6d3b" />
              <path d="M1 14l3-6h12l-2 6z" fill="#f3dba7" stroke="#8a6d3b" />
              <path d="M11 4q1-3 4-2M13 .500l2 1.500-2 1.500" stroke="#333" />
            </S>
          </QatItem>
          <QatItem $w={23}>
            <S>
              <path d="M.500 .500h13l2 2v13H.500z" fill="#55606a" stroke="#3c4248" />
              <rect x="3" y="1" width="9" height="5" fill="#e8e8e8" />
              <rect x="3.500" y="9" width="9" height="6" fill="#9fc4d8" />
            </S>
          </QatItem>
          <QatItem $w={23}>
            <S>
              <path d="M3 5q6-4 10 0 2 3 0 6M5 1.500L2 5.500l5 1" stroke="#b4b4b4" strokeWidth="2" />
            </S>
          </QatItem>
          <QatItem $w={16}>
            <Caret $c="#b0b0b0" />
          </QatItem>
          <QatItem $w={22}>
            <S>
              <path d="M13 5q-6-4-10 0-2 3 0 6M11 1.500l3 4-5 1" stroke="#b4b4b4" strokeWidth="2" />
            </S>
          </QatItem>
          <QatItem $w={15}>
            <Caret $c="#b0b0b0" />
          </QatItem>
          <QatItem $w={24}>
            <S>
              <rect x="0.500" y="1" width="3" height="3" stroke={BLUE} />
              <rect x="0.500" y="6" width="3" height="3" stroke={BLUE} />
              <rect x="0.500" y="11" width="3" height="3" stroke={BLUE} />
              <path d="M5 4l3-3v2h3v2H8v2zM15 4l-3 3V5H9" fill="#0f5f86" />
              <path d="M6 10h9M6 12.500h9M6 15h9" stroke="#666" />
            </S>
          </QatItem>
          <QatItem $w={23}>
            <S>
              <rect x="0.500" y="1.500" width="13" height="10" fill="#fff" stroke="#666" />
              <rect x="4.500" y="5.500" width="7" height="8" fill="#bfe4f3" stroke={BLUE} />
              <path d="M.5 4h13" stroke="#666" />
            </S>
          </QatItem>
          <QatItem $w={15}>
            <Caret $c="#666" />
          </QatItem>
          <QatItem $w={21}>
            <S>
              <path d="M1 15V4h7l1 1h6v10z" fill="#f6e2b4" stroke="#a98a4c" />
              <path d="M14 3H9M11 .500L8.500 3 11 5.500" stroke="#333" />
            </S>
          </QatItem>
          <QatSep />
          <QatItem $w={8} />
          <QatItem $w={8}>
            <S w={8} h={8}>
              <path d="M0 .500h8" stroke="#444" />
              <path d="M0 3h8L4 7.500z" fill="#444" />
            </S>
          </QatItem>
        </Qat>
        <Title>TEST_PART (Active) - PTC Creo Parametric 3.0</Title>
        <WinControls>
          <S w={10} h={10}>
            <rect x=".5" y="5.500" width="9" height="3" stroke="#c8c8c8" />
          </S>
          <S w={12} h={12}>
            <rect x="4.500" y=".5" width="7" height="7" stroke="#c8c8c8" />
            <rect x=".5" y="4.500" width="7" height="7" fill="#fdfdfd" stroke="#c8c8c8" />
          </S>
          <S w={12} h={12}>
            <path d="M1 1l10 10M11 1L1 11" stroke="#c8c8c8" strokeWidth="2.400" />
            <path d="M1 1l10 10M11 1L1 11" stroke="#fdfdfd" strokeWidth=".8" />
          </S>
        </WinControls>
      </TitleBar>

      <TabRow>
        <FileTab $w={43}>
          File
          <Caret />
        </FileTab>
        <Tab $w={57} $active>
          Model
        </Tab>
        <Tab $w={71}>Analysis</Tab>
        <Tab $w={73}>Annotate</Tab>
        <Tab $w={66}>Render</Tab>
        <Tab $w={53}>Tools</Tab>
        <Tab $w={52}>View</Tab>
        <Tab $w={119}>Flexible Modeling</Tab>
        <Tab $w={93}>Applications</Tab>
        <HelpTools>
          <S w={13} h={10}>
            <path d="M1 5l5-4 5 4M1 9l5-4 5 4" stroke="#444" strokeWidth="1.200" />
          </S>
          <S w={17} h={17}>
            <circle cx="10" cy="7" r="5" stroke="#333" strokeWidth="2.400" />
            <path d="M6 11l-5 5" stroke="#333" strokeWidth="2.800" />
          </S>
          <S w={18} h={18}>
            <circle cx="9" cy="9" r="8.500" fill="#333" />
            <path d="M3 8l6-3 6 3-6 3z" fill="#fff" />
            <path d="M5 10v2q4 3 8 0v-2" stroke="#fff" />
          </S>
          <Caret />
          <HelpCircle>?</HelpCircle>
        </HelpTools>
      </TabRow>

      <Ribbon>
        <Group w={143} label="Operations">
          <Big w={56} icon={<RegenIcon />} lines={["Regenerate"]} caret />
          <SmallCol>
            <Small icon="copy" label="Copy" off />
            <Small icon="paste" label="Paste" off caret />
            <Small icon="del" label="Delete" off caret />
          </SmallCol>
        </Group>
        <Group w={139} label="Get Data">
          <SmallCol>
            <Small icon="udf" label="User-Defined Feature" />
            <Small icon="copyGeom" label="Copy Geometry" />
            <Small icon="shrink" label="Shrinkwrap" />
          </SmallCol>
        </Group>
        <Group w={207} label="Datum">
          <Big w={32} icon={<Plane w={32} h={22} sw={0.8} />} lines={["Plane"]} />
          <SmallCol $w={111}>
            <Small icon="axis" label="Axis" />
            <Small icon="point" label="Point" caret />
            <Small icon={<Csys />} label="Coordinate System" />
          </SmallCol>
          <Big w={33} icon={<SketchIcon />} lines={["Sketch"]} />
        </Group>
        <Group w={142} label="Shapes" pad={7} gap={8}>
          <Big w={38} icon={<ExtrudeIcon />} lines={["Extrude"]} />
          <SmallCol>
            <Small icon="revolve" label="Revolve" />
            <Small icon="sweep" label="Sweep" caret />
            <Small icon="blend" label="Swept Blend" />
          </SmallCol>
        </Group>
        <Group w={157} label="Engineering" gap={0}>
          <SmallCol $w={84}>
            <Small icon="hole" label="Hole" />
            <Small icon="round" label="Round" caret />
            <Small icon="chamfer" label="Chamfer" caret />
          </SmallCol>
          <SmallCol>
            <Small icon="draft" label="Draft" caret />
            <Small icon="shell" label="Shell" />
            <Small icon="rib" label="Rib" caret />
          </SmallCol>
        </Group>
        <Group w={242} label="Editing" gap={0}>
          <Big w={34} icon={<PatternIcon />} lines={["Pattern"]} caret />
          <SmallCol $w={58} $ml={8}>
            <Small icon="mirror" label="Mirror" off />
            <Small icon="trim" label="Trim" off />
            <Small icon="merge" label="Merge" off />
          </SmallCol>
          <SmallCol $w={70}>
            <Small icon="extend" label="Extend" off />
            <Small icon="offset" label="Offset" off />
            <Small icon="intersect" label="Intersect" off />
          </SmallCol>
          <SmallCol>
            <Small icon="project" label="Project" />
            <Small icon="thicken" label="Thicken" off />
            <Small icon="solidify" label="Solidify" off />
          </SmallCol>
        </Group>
        <Group w={135} label="Surfaces">
          <Big w={47} icon={<BoundaryIcon />} lines={["Boundary", "Blend"]} />
          <SmallCol>
            <Small icon="fill" label="Fill" />
            <Small icon="style" label="Style" />
            <Small icon="freestyle" label="Freestyle" />
          </SmallCol>
        </Group>
        <Group w={57} label="Measure" noCaret>
          <Big w={42} icon={<MeasureIcon />} lines={["Measure"]} caret />
        </Group>
        <Group />
      </Ribbon>

      <Main>
        <Sidebar>
          <SideTabs>
            <SideTab $active>
              <TreeIcon />
            </SideTab>
            <SideTab>
              <GhostIcon />
            </SideTab>
            <SideTab>
              <StarFolder />
            </SideTab>
          </SideTabs>
          <TreePanel>
            <TreeHeader>
              <TreeTitle>Model Tree</TreeTitle>
              <S w={18} h={20}>
                <path d="M1 2h9q2 0 2 2H8v2H4V4H1z" fill="#8a7a5c" />
                <rect x="4.500" y="6" width="3" height="13" fill="#d2a860" stroke="#8a6d3b" strokeWidth=".6" />
                <rect x="14" y="1" width="2" height="9" fill="#777" />
                <rect x="13" y="10" width="4" height="9" fill="#d2a860" stroke="#8a6d3b" strokeWidth=".6" />
              </S>
              <Spacer $w={9} />
              <Caret />
              <Spacer $w={10} />
              <S w={16} h={20}>
                <path d="M.5 .5h10l5 5v14H.5z" fill="#fbfcfd" stroke="#9a9ea2" />
                <path d="M3 8h2M7 8h6M3 12h2M7 12h6M3 16h2M7 16h6" stroke="#666" />
              </S>
              <Spacer $w={9} />
              <Caret />
            </TreeHeader>
            <TreeBody>
              <TreeRow $pad={11}>
                <RowIcon $gap={3}>
                  <CubeSmall />
                </RowIcon>
                TEST_PART.PRT
              </TreeRow>
              {tree.map((t) => (
                <TreeRow $pad={15} key={t}>
                  <Expander />
                  <RowIcon $gap={4}>
                    <Plane w={15} h={11} c="#6f5a34" sw={1.300} />
                  </RowIcon>
                  {t}
                </TreeRow>
              ))}
              <TreeRow $pad={15}>
                <Expander $w={14} />
                <Csys />
                PRT_CSYS_DEF
              </TreeRow>
              {features.map((f) => (
                <TreeRow $pad={15} key={f.name}>
                  <Expander>
                    <Arrow />
                  </Expander>
                  <RowIcon $gap={4}>
                    {f.pattern ? (
                      <S w={15} h={15}>
                        <rect x=".5" y=".5" width="14" height="14" fill="#f4f4f8" stroke="#9a9aa4" />
                        <path d="M3 3h3v2H3zM9 3h3v2H9zM3 10h3v2H3zM9 10h3v2H9z" fill="#6a4aa0" />
                      </S>
                    ) : (
                      <CubeSmall />
                    )}
                  </RowIcon>
                  {f.name}
                </TreeRow>
              ))}
              <TreeRow $pad={15}>
                <Expander $w={18} />
                <RowIcon $gap={5}>
                  <S w={11} h={11}>
                    <path d="M0 4h5V0l6 5.500L5 11V7H0z" fill="#12860f" />
                  </S>
                </RowIcon>
                Insert Here
              </TreeRow>
            </TreeBody>
          </TreePanel>
        </Sidebar>

        <Canvas>
          <Gear />
          <GfxBar>
            <GfxBtn>
              <Magnifier mode="fit" />
            </GfxBtn>
            <GfxBtn>
              <Magnifier mode="in" />
            </GfxBtn>
            <GfxBtn>
              <Magnifier mode="out" />
            </GfxBtn>
            <GfxBtn>
              <S>
                <rect x=".5" y="1" width="15" height="14" fill="#cfe8f4" stroke="#999" />
                <path d="M1 1h14v2H1z" fill="#999" />
                <path d="M3 15l10-10v10z" fill="#4a9fc4" />
                <path d="M2 15L13 4" stroke="#135f80" strokeWidth="1.300" />
              </S>
            </GfxBtn>
            <GfxBtn>
              <SmallCorner>
                <path d="M1 5.500L5.500 1.500h10v11l-4 4H1zM1 5.500h10.500v11M11.500 5.500l4-4" stroke="#135f80" strokeWidth="1.300" fill="#fff" />
              </SmallCorner>
            </GfxBtn>
            <GfxBtn>
              <SmallCorner>
                <path d="M1 5l3-3h10v10H1z" fill="#d4edf8" stroke="#a8c6d6" />
                <path d="M9 8h7v8H9z" fill="#fff" stroke="#888" />
                <path d="M10.500 10.500h4M10.500 13h4" stroke="#777" />
              </SmallCorner>
            </GfxBtn>
            <GfxBtn>
              <S w={18}>
                <rect x="1" y="1" width="12" height="12" fill="#f4f4f4" stroke="#aaa" />
                <path d="M1 4.500h12M1 8h12M5 1v12" stroke="#bbb" />
                <rect x="6" y="8" width="11" height="7" rx="1" fill="#444" />
                <circle cx="11.500" cy="11.500" r="2.500" fill="#ccc" stroke="#222" />
              </S>
            </GfxBtn>
            <GfxBtn>
              <SmallCorner>
                <path d="M1 1l3 3M4 1L1 4M7 5l2-3M6 11l-2 5" stroke={TAN} />
                <path d="M13 3v10M8 8h10M9 12l8-8M9 4l8 8" stroke={TAN} strokeWidth=".9" />
              </SmallCorner>
            </GfxBtn>
            <GfxBtn $on>
              <S w={18}>
                <rect x=".5" y="1" width="9" height="7" fill="#f4e7c4" stroke="#777" />
                <path d="M12 3h4v4M16 7l-2 2-2-2" stroke="#333" />
                <ellipse cx="11" cy="13" rx="5" ry="2.500" fill="#fff" stroke="#333" />
                <circle cx="11" cy="13" r="1.500" fill="#333" />
              </S>
            </GfxBtn>
            <GfxBtn $on>
              <S w={16}>
                <path d="M4 3l5 5-5 5M9 8h4" stroke="#555" />
                <circle cx="4" cy="3" r="2.500" fill="#7bbf6a" />
                <circle cx="13" cy="8" r="2.500" fill="#d88080" />
                <circle cx="4" cy="13" r="2.500" fill="#5a9fc8" />
              </S>
            </GfxBtn>
          </GfxBar>

          <Dialog>
            <DialogTitle>
              Rename
              <CloseX>
                <S w={9} h={9}>
                  <path d="M1 1l7 7M8 1L1 8" stroke="#6a6a6a" strokeWidth="2" />
                </S>
              </CloseX>
            </DialogTitle>
            <DialogBody>
              <FormRow>
                <FieldLabel $w={86}>Model:</FieldLabel>
                TEST_PART.PRT
              </FormRow>
              <NameRow>
                <FieldLabel $w={86}>New name:</FieldLabel>
                <Field>TEST_PART</Field>
              </NameRow>
              <OutlinedRow>
                <TightLabel $w={77}>Common name:</TightLabel>
                <Field $pad={5}>GEAR</Field>
              </OutlinedRow>
              <RadioRow>
                <Radio />
                Rename on disk and in session
              </RadioRow>
              <RadioBoxed>
                <Radio $on />
                Rename in session
              </RadioBoxed>
            </DialogBody>
            <DialogFooter>
              <DlgBtn $primary>OK</DlgBtn>
              <DlgBtn>Cancel</DlgBtn>
            </DialogFooter>
          </Dialog>
        </Canvas>
      </Main>

      <StatusBar>
        <StatusBtn $on>
          <TreeIcon s={12} />
        </StatusBtn>
        <StatusBtn>
          <S>
            <circle cx="8" cy="8" r="7" fill="#4aa3dc" />
            <path d="M2 11C5 4 11 1 15 1M4 14c3-1 8-6 10-11" stroke="#d4ecf8" />
            <path d="M5 15l9-13" stroke="#222" strokeWidth=".6" />
          </S>
        </StatusBtn>
        <StatusSep $ml={6} $mr={913} />
        <StatusSep $mr={5} />
        <Dot $c="#49d04a" $s={10} />
        <Dot $c="#c8c9cb" $s={6} />
        <Dot $c="#c8c9cb" $s={6} />
        <StatusSep $ml={3} $mr={5} />
        <S w={13} h={18}>
          <path d="M1 0v18" stroke="#b8b8b8" />
          <path d="M1 1l11 5-11 5z" fill="#c4c4c4" />
        </S>
        <StatusSep $ml={18} />
        <FindBtn>
          <S w={17} h={15}>
            <rect x="1" y="4" width="6" height="10" rx="1" fill="#333" />
            <rect x="10" y="4" width="6" height="10" rx="1" fill="#333" />
            <rect x="3" y="1" width="3" height="4" fill="#555" />
            <rect x="11" y="1" width="3" height="4" fill="#555" />
            <rect x="7" y="5" width="3" height="4" fill="#777" />
          </S>
        </FindBtn>
        <Select>
          Smart
          <SelectBtn>
            <Caret />
          </SelectBtn>
        </Select>
      </StatusBar>

      <Taskbar>
        {taskIcons.map((t, i) => (
          <TaskItem key={i} $open={t.open}>
            {t.node}
          </TaskItem>
        ))}
        <Tray>
          <TrayCell $w={20}>
            <S w={12} h={8}>
              <path d="M1 7l5-5 5 5" stroke="#fff" />
            </S>
          </TrayCell>
          <TrayCell $w={26}>
            <S w={17} h={13}>
              <rect x="4.500" y="3.500" width="11" height="8" stroke="#fff" />
              <rect x="11" y="5" width="3" height="5" fill="#fff" />
              <path d="M2 1v3M5 1v3M1 4h5v2L3.500 8 1 6z" stroke="#fff" />
            </S>
          </TrayCell>
          <TrayCell $w={26}>
            <S w={15} h={15}>
              <path d="M2 13Q3 5 12 2M5 13Q6 8 12 5M8 13q0-3 4-5" stroke="#aaa" />
              <circle cx="11" cy="12" r="1.800" fill="#fff" />
            </S>
          </TrayCell>
          <TrayCell $w={22}>
            <S w={16} h={15}>
              <path d="M1 5h3l4-3v11L4 10H1z" stroke="#fff" />
              <path d="M10 5q1.500 2.500 0 5M12 3q3 4.500 0 9" stroke="#999" />
            </S>
          </TrayCell>
          <TrayCell $w={30}>
            <S w={14} h={17}>
              <path d="M2 15L9 3q2-3 3-1t-1 4L6 14q-2 2-2 0l4-8" stroke="#fff" />
              <path d="M1 16h4" stroke="#fff" />
            </S>
          </TrayCell>
          <TrayCell $w={36}>
            <S w={23} h={15}>
              <rect x=".5" y=".5" width="22" height="14" stroke="#fff" />
              <path d="M3 4h17M3 7h17M5 11h13" stroke="#ddd" strokeDasharray="1.200 .8" />
            </S>
          </TrayCell>
          <TrayCell $w={33}>ENG</TrayCell>
          <TrayCell $w={64}>10:50 PM</TrayCell>
          <TrayCell $w={33}>
            <S w={18} h={18}>
              <path d="M1.500 1.500h15v12h-4l-3 3-3-3h-5z" stroke="#fff" />
            </S>
          </TrayCell>
          <TrayCell $w={17} />
        </Tray>
      </Taskbar>
    </Page>
  );
}

export default App;
